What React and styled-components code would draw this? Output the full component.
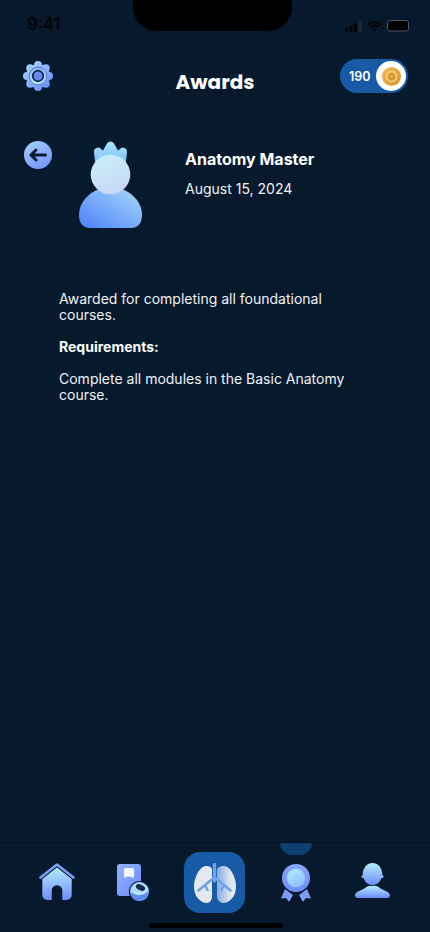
import React from "react";
import styled, { createGlobalStyle } from "styled-components";

const GlobalStyle = createGlobalStyle`
  html, body {
    margin: 0;
    padding: 0;
    background: #06192d;
  }
`;

const Screen = styled.div`
  width: 430px;
  height: 932px;
  background: #06192d;
  display: flex;
  flex-direction: column;
  position: relative;
  overflow: hidden;
  font-family: Inter, "Liberation Sans", sans-serif;
  color: #fff;
`;

const Notch = styled.div`
  position: absolute;
  top: 0;
  left: 133px;
  width: 159px;
  height: 31px;
  background: #000;
  border-radius: 0 0 24px 24px;
`;

const StatusBar = styled.div`
  height: 50px;
  padding: 14px 20px 0 27px;
  box-sizing: border-box;
  display: flex;
  justify-content: space-between;
  align-items: flex-start;
  flex-shrink: 0;
`;

const Clock = styled.span`
  font-size: 17px;
  font-weight: 500;
  line-height: 21px;
  color: #000;
`;

const StatusIcons = styled.div`
  display: flex;
  align-items: center;
  gap: 5px;
  padding-top: 6px;
`;

const Header = styled.header`
  height: 62px;
  padding: 9px 22px 0 23px;
  box-sizing: border-box;
  display: flex;
  justify-content: space-between;
  align-items: flex-start;
  position: relative;
  flex-shrink: 0;
`;

const GearSlot = styled.div`
  margin-top: 2px;
  height: 30px;
`;

const Title = styled.h1`
  position: absolute;
  left: 0;
  right: 0;
  top: 19px;
  margin: 0;
  text-align: center;
  font-family: Poppins, "Open Sans", Inter, sans-serif;
  font-size: 20px;
  font-weight: 700;
  line-height: 26px;
`;

const CoinPill = styled.div`
  width: 68px;
  height: 34px;
  background: #175aa5;
  border-radius: 17px;
  display: flex;
  align-items: center;
  justify-content: space-between;
  padding: 0 2px 0 9px;
  box-sizing: border-box;
  font-size: 12.5px;
  font-weight: 600;
`;

const CoinHolder = styled.div`
  width: 30px;
  height: 30px;
  border-radius: 50%;
  background: #fff;
  display: flex;
  align-items: center;
  justify-content: center;
`;

const Content = styled.main`
  flex: 1;
  display: flex;
  flex-direction: column;
`;

const AwardRow = styled.section`
  display: flex;
  align-items: flex-start;
  padding: 29px 0 0 24px;
  height: 179px;
  box-sizing: border-box;
`;

const BackButton = styled.button`
  width: 28px;
  height: 28px;
  padding: 0;
  border: 0;
  border-radius: 50%;
  background: linear-gradient(150deg, #a8d2fb, #6f8cff);
  display: flex;
  align-items: center;
  justify-content: center;
  flex-shrink: 0;
`;

const Badge = styled.div`
  margin-left: 27px;
  width: 63px;
  flex-shrink: 0;
`;

const AwardInfo = styled.div`
  margin-left: 43px;
  padding-top: 8px;
`;

const AwardName = styled.div`
  font-size: 16px;
  font-weight: 700;
  line-height: 20px;
  margin-bottom: 11px;
`;

const AwardDate = styled.div`
  font-size: 14px;
  line-height: 18px;
  color: #f0f3f6;
`;

const Description = styled.div`
  padding: 0 60px 0 59px;
  font-size: 14px;
  line-height: 16px;
  color: #f0f3f6;
`;

const Paragraph = styled.p`
  margin: 0 0 16px;
  font-weight: ${(props) => (props.$bold ? 700 : 400)};
  color: ${(props) => (props.$bold ? "#fff" : "#f0f3f6")};
`;

const TabBar = styled.nav`
  height: 90px;
  border-top: 1px solid #03121f;
  box-sizing: border-box;
  padding: 0 0 20px 39px;
  display: flex;
  align-items: flex-start;
  position: relative;
  flex-shrink: 0;
`;

const Tab = styled.div`
  margin-left: ${(props) => props.$left}px;
  margin-top: ${(props) => props.$top}px;
  display: flex;
`;

const ActiveTab = styled.div`
  width: 61px;
  height: 61px;
  margin-left: 34px;
  margin-top: 9px;
  background: #175aa5;
  border-radius: 16px;
  display: flex;
  align-items: center;
  justify-content: center;
`;

const ActiveDot = styled.div`
  position: absolute;
  top: 0;
  left: 280px;
  width: 32px;
  height: 12px;
  background: #0d3f70;
  border-radius: 0 0 16px 16px;
`;

const HomeIndicator = styled.div`
  position: absolute;
  left: 149px;
  bottom: 4px;
  width: 134px;
  height: 5px;
  background: #000;
  border-radius: 3px;
`;

const Gradients = () => (
  <svg width="0" height="0" style={{ position: "absolute" }}>
    <defs>
      <linearGradient id="skyDown" x1="0" y1="0" x2="0" y2="1">
        <stop offset="0" stopColor="#b3eefb" />
        <stop offset="1" stopColor="#6f8cff" />
      </linearGradient>
      <linearGradient id="gear" gradientUnits="userSpaceOnUse" x1="4" y1="2" x2="26" y2="28">
        <stop offset="0" stopColor="#a7d2fb" />
        <stop offset="1" stopColor="#6f8cff" />
      </linearGradient>
      <linearGradient id="gearInner" x1="0" y1="0" x2="0" y2="1">
        <stop offset="0" stopColor="#8fb4fb" />
        <stop offset="1" stopColor="#b9ecfb" />
      </linearGradient>
      <linearGradient id="head" x1="0.3" y1="0" x2="0.7" y2="1">
        <stop offset="0" stopColor="#c9eff9" />
        <stop offset="1" stopColor="#c7d6f6" />
      </linearGradient>
      <linearGradient id="body" x1="0" y1="1" x2="1" y2="0">
        <stop offset="0" stopColor="#4a80fb" />
        <stop offset="1" stopColor="#abdcf8" />
      </linearGradient>
      <linearGradient id="crown" x1="0" y1="0" x2="0" y2="1">
        <stop offset="0" stopColor="#a6e6fb" />
        <stop offset="1" stopColor="#6fa7fb" />
      </linearGradient>
      <linearGradient id="coin" x1="0" y1="0" x2="1" y2="1">
        <stop offset="0" stopColor="#f3bd55" />
        <stop offset="1" stopColor="#d9912e" />
      </linearGradient>
      <linearGradient id="card" x1="0" y1="0" x2="1" y2="1">
        <stop offset="0" stopColor="#8fb4fc" />
        <stop offset="1" stopColor="#6f88fb" />
      </linearGradient>
      <linearGradient id="lungRight" x1="0" y1="0" x2="1" y2="0">
        <stop offset="0" stopColor="#84ace4" />
        <stop offset="0.7" stopColor="#dfe6f0" />
        <stop offset="1" stopColor="#e6ebf2" />
      </linearGradient>
      <linearGradient id="ribbonRing" x1="0" y1="0" x2="0" y2="1">
        <stop offset="0" stopColor="#88a8fb" />
        <stop offset="1" stopColor="#6f8cfb" />
      </linearGradient>
      <linearGradient id="ribbonCore" x1="0" y1="0" x2="0.6" y2="1">
        <stop offset="0" stopColor="#b3eefb" />
        <stop offset="1" stopColor="#8fc0fb" />
      </linearGradient>
    </defs>
  </svg>
);

const SignalIcon = () => (
  <svg width="17" height="11" viewBox="0 0 17 11">
    <rect x="0" y="7" width="3" height="4" rx="1" fill="#000" />
    <rect x="4.500" y="5" width="3" height="6" rx="1" fill="#000" />
    <rect x="9" y="2.500" width="3" height="8.500" rx="1" fill="#000" />
    <rect x="13.500" y="0" width="3" height="11" rx="1" fill="#1c2a38" />
  </svg>
);

const WifiIcon = () => (
  <svg width="15" height="11" viewBox="0 0 15 11" fill="none">
    <path d="M1 3.800a9.200 9.200 0 0 1 13 0" stroke="#000" strokeWidth="1.800" />
    <path d="M3.300 6.200a6 6 0 0 1 8.400 0" stroke="#000" strokeWidth="1.800" />
    <path d="M7.500 10.800 5.400 8.500a3 3 0 0 1 4.200 0z" fill="#000" />
  </svg>
);

const BatteryIcon = () => (
  <svg width="23" height="12" viewBox="0 0 23 12">
    <rect x="0.500" y="0.500" width="21" height="10.500" rx="2.500" fill="#000" stroke="#46586b" />
  </svg>
);

const gearLobes = [0, 45, 90, 135, 180, 225, 270, 315].map((angle) => ({
  angle,
  cx: 15 + 11 * Math.cos((angle * Math.PI) / 180),
  cy: 15 + 11 * Math.sin((angle * Math.PI) / 180),
}));

const GearIcon = () => (
  <svg width="30" height="30" viewBox="0 0 30 30" style={{ display: "block" }}>
    <g fill="url(#gear)">
      {gearLobes.map((lobe) => (
        <circle key={lobe.angle} cx={lobe.cx} cy={lobe.cy} r="4" />
      ))}
      <circle cx="15" cy="15" r="12" />
    </g>
    <circle cx="15" cy="15" r="8.800" fill="url(#gearInner)" stroke="#2a4a80" strokeWidth="0.600" />
    <circle cx="15" cy="15" r="5.300" fill="#6587ee" stroke="#0c2242" strokeWidth="1.700" />
  </svg>
);

const CoinIcon = () => (
  <svg width="19" height="19" viewBox="0 0 19 19">
    <circle cx="9.500" cy="9.500" r="9.500" fill="url(#coin)" />
    <circle cx="9.500" cy="9.500" r="5" fill="none" stroke="#f6cf85" strokeWidth="1.400" />
    <circle cx="9.500" cy="9.500" r="2.500" fill="#e9a945" stroke="#cf8d30" strokeWidth="1.100" />
  </svg>
);

const BackArrow = () => (
  <svg width="18" height="14" viewBox="0 0 18 14" fill="none" stroke="#0b1b33" strokeWidth="3" strokeLinecap="round" strokeLinejoin="round">
    <path d="M16.500 7H2M7 2 2 7l5 5" />
  </svg>
);

const AwardFigure = () => (
  <svg width="63" height="87" viewBox="0 0 63 87" style={{ display: "block" }}>
    <path
      fill="url(#crown)"
      d="M17.500 34 15 11a4 4 0 0 1 7-3l2 1.500 4-7a4 4 0 0 1 7 0l4 7 2-1.500a4 4 0 0 1 7 3l-2.500 23z"
    />
    <path
      fill="url(#body)"
      d="M31.500 46c17 0 31.500 13 31.500 28 0 8-4 13-11 13H11C4 87 0 82 0 74c0-15 14.500-28 31.500-28z"
    />
    <circle cx="31.500" cy="33.500" r="19.800" fill="url(#head)" />
  </svg>
);

const HomeIcon = () => (
  <svg width="36" height="37" viewBox="0 0 36 37" style={{ display: "block" }}>
    <path fill="url(#skyDown)" d="M18 4.500 32.700 16v16a5 5 0 0 1-5 5h-4.400V27.500a5.300 5.300 0 0 0-10.600 0V37H8.300a5 5 0 0 1-5-5V16z" />
    <path fill="none" stroke="#7d9dfb" strokeWidth="2.600" strokeLinecap="round" strokeLinejoin="round" d="M1.500 14.500 18 1.500l16.500 13" />
  </svg>
);

const CardIcon = () => (
  <svg width="33" height="38" viewBox="0 0 33 38" style={{ display: "block" }}>
    <rect x="0" y="0" width="24" height="32" rx="3" fill="url(#card)" />
    <path fill="#f3f6fb" d="M8.500 4h7A1.500 1.500 0 0 1 17 5.500V13l-1.700.8-2-1.300h-3l-2 1.300-1.300-.8V5.500A1.500 1.500 0 0 1 8.500 4z" />
    <circle cx="22.500" cy="27.500" r="10" fill="#a8dcfb" stroke="#0d2140" strokeWidth="1.200" />
    <path fill="#5f8af0" d="M13.400 28c3 2.500 7 3.500 10 2.800 2.500-.6 5-1.800 8-4.300 1 5-3 10.500-9 10.500-5 0-8.500-4-9-9z" />
    <path fill="#bfeafb" d="M16 27c3 2 6 2.500 9 1.500 2-.7 4-1.600 5.500-3l.5 1.500c-3 3-6 4-9 4-2.500 0-5-1.500-6-4z" />
    <ellipse cx="23.500" cy="23.500" rx="4.800" ry="2.800" fill="#14294a" transform="rotate(25 23.500 23.500)" />
  </svg>
);

const LungsIcon = () => (
  <svg width="42" height="40" viewBox="0 0 42 40" style={{ display: "block" }}>
    <path fill="#e4e9f0" d="M12 3C6 3 0 14 0 24c0 10 7 16 13 16 3 0 5-3 5-7V7c0-3-3-4-6-4z" />
    <path fill="url(#lungRight)" d="M30 3c6 0 12 11 12 21 0 10-7 16-13 16-3 0-6-3-6-7V7c0-3 4-4 7-4z" />
    <g fill="none" stroke="#6fa3e6" strokeLinecap="round" strokeLinejoin="round">
      <path d="M20.500 1.500V18" strokeWidth="3.400" />
      <path d="M19.500 15 4.500 27.500M11 22l2.500 5" strokeWidth="2.600" />
      <path d="M21.500 15l15 12.500M30 22l-2.500 5" strokeWidth="2.600" />
    </g>
  </svg>
);

const RibbonIcon = () => (
  <svg width="30" height="38" viewBox="0 0 30 38" style={{ display: "block" }}>
    <path fill="#7d9dfb" d="M4 25 0 34.500l5-.5 3 4 4-7zM26 25l4 9.500-5-.5-3 4-4-7z" />
    <circle cx="15" cy="14" r="14.500" fill="#06192d" />
    <circle cx="15" cy="14" r="14" fill="url(#ribbonRing)" />
    <circle cx="15" cy="14" r="9.200" fill="url(#ribbonCore)" />
  </svg>
);

const PersonIcon = () => (
  <svg width="35" height="35" viewBox="0 0 35 35" style={{ display: "block" }}>
    <path fill="url(#skyDown)" d="M17.500 22.500c3 0 5 .5 7.500 2.500 3.500 2.500 10 3.500 10 7.500 0 1.500-1.500 2.500-3 2.500H3c-1.500 0-3-1-3-2.500 0-4 6.500-5 10-7.500 2.500-2 4.500-2.500 7.500-2.500z" />
    <path fill="none" stroke="#06192d" strokeWidth="0.800" strokeLinecap="round" d="M13.500 21.500c2.500 1.500 5.500 1.500 8 0" />
    <ellipse cx="17.500" cy="11" rx="9.800" ry="11" fill="url(#skyDown)" />
    <circle cx="8" cy="13.500" r="1.600" fill="#8fb4fb" />
    <circle cx="27" cy="13.500" r="1.600" fill="#8fb4fb" />
  </svg>
);

const App = () => (
  <Screen>
    <GlobalStyle />
    <Gradients />
    <Notch />
    <StatusBar>
      <Clock>9:41</Clock>
      <StatusIcons>
        <SignalIcon />
        <WifiIcon />
        <BatteryIcon />
      </StatusIcons>
    </StatusBar>
    <Header>
      <GearSlot>
        <GearIcon />
      </GearSlot>
      <Title>Awards</Title>
      <CoinPill>
        190
        <CoinHolder>
          <CoinIcon />
        </CoinHolder>
      </CoinPill>
    </Header>
    <Content>
      <AwardRow>
        <BackButton aria-label="Back">
          <BackArrow />
        </BackButton>
        <Badge>
          <AwardFigure />
        </Badge>
        <AwardInfo>
          <AwardName>Anatomy Master</AwardName>
          <AwardDate>August 15, 2024</AwardDate>
        </AwardInfo>
      </AwardRow>
      <Description>
        <Paragraph>Awarded for completing all foundational courses.</Paragraph>
        <Paragraph $bold>Requirements:</Paragraph>
        <Paragraph>Complete all modules in the Basic Anatomy course.</Paragraph>
      </Description>
    </Content>
    <TabBar>
      <ActiveDot />
      <Tab $left={0} $top={20}>
        <HomeIcon />
      </Tab>
      <Tab $left={42} $top={21}>
        <CardIcon />
      </Tab>
      <ActiveTab>
        <LungsIcon />
      </ActiveTab>
      <Tab $left={36} $top={21}>
        <RibbonIcon />
      </Tab>
      <Tab $left={44} $top={20}>
        <PersonIcon />
      </Tab>
      <HomeIndicator />
    </TabBar>
  </Screen>
);

export default App;
